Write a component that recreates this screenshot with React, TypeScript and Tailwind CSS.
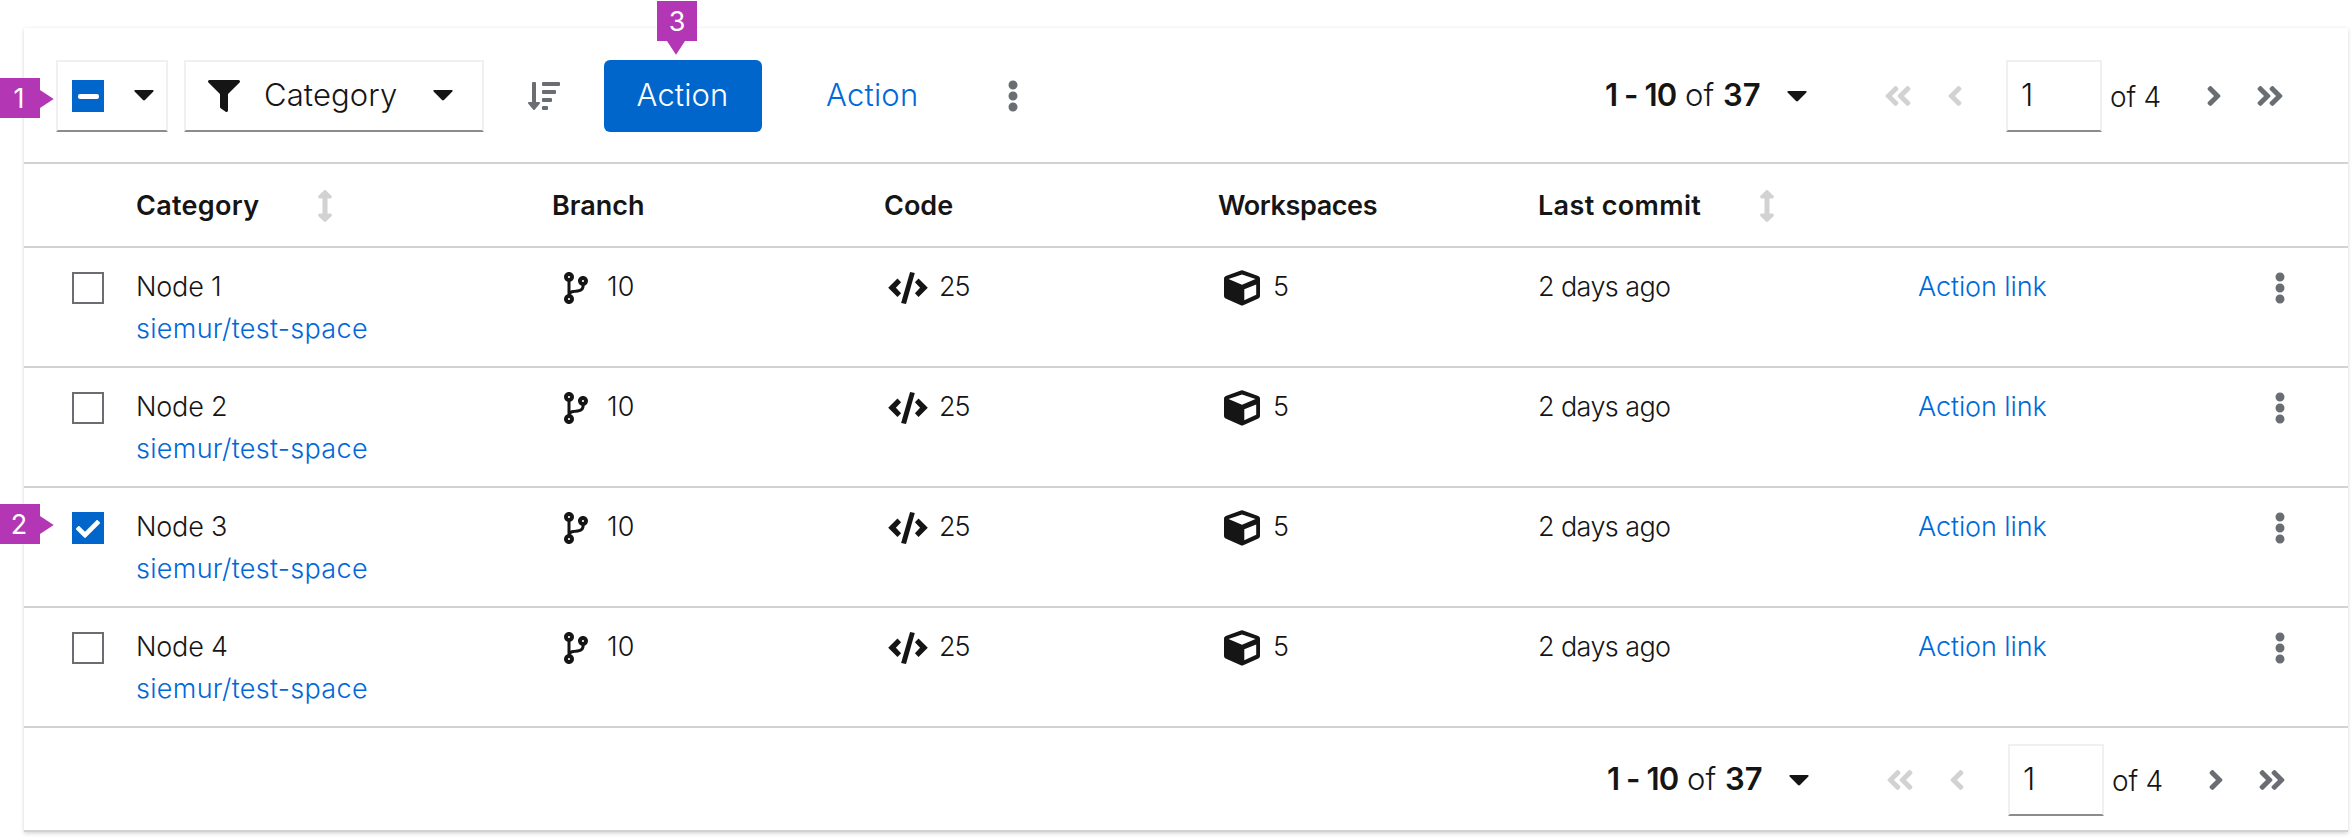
import React from "react";
import {
  FaAngleDoubleLeft,
  FaAngleDoubleRight,
  FaAngleLeft,
  FaAngleRight,
  FaArrowsAltV,
  FaCheck,
  FaCodeBranch,
  FaEllipsisV,
  FaFilter,
  FaSortAmountDown,
} from "react-icons/fa";

const rows = [
  { name: "Node 1", checked: false },
  { name: "Node 2", checked: false },
  { name: "Node 3", checked: true },
  { name: "Node 4", checked: false },
];

const columns =
  "grid grid-cols-[112px_416px_332px_335px_319px_380px_1fr] border-b-2 border-[#d2d2d2]";

function Caret() {
  return (
    <svg className="block h-[11px] w-[20px] shrink-0" viewBox="0 0 20 11" fill="#151515">
      <path d="M1.3 0h17.4c.9 0 1.3 1 .7 1.6L11 10.1c-.6.6-1.4.6-2 0L.6 1.6C0 1 .4 0 1.3 0z" />
    </svg>
  );
}

function CodeIcon() {
  return (
    <svg className="block h-8 w-10 shrink-0" viewBox="0 0 40 32" fill="#151515">
      <path d="M.2 15.8 9.5 6.6 13.1 10.2 7.9 15.8 13.1 21.3 9.5 25z" />
      <path d="M39.8 15.8 30.5 6.6 26.9 10.2 32.1 15.8 26.9 21.3 30.5 25z" />
      <path d="M22.1 0 26.8 1.1 18 32 13.1 30.9z" />
    </svg>
  );
}

function CubeIcon() {
  return (
    <svg className="block h-9 w-9 shrink-0" viewBox="0 0 36 36" fill="#151515" fillRule="evenodd">
      <path d="M16.9.4a3 3 0 0 1 2.2 0l15.1 5.5A2.8 2.8 0 0 1 36 8.5v17.6a2.8 2.8 0 0 1-1.6 2.5l-15.2 6.6a3 3 0 0 1-2.4 0L1.6 28.6A2.8 2.8 0 0 1 0 26.1V8.5a2.8 2.8 0 0 1 1.8-2.6zM18 4.5 4.5 9 18 14.8 31.5 9zM20.3 19.2V30.2L32.2 24.8V14.5z" />
    </svg>
  );
}

function Sort() {
  return <FaArrowsAltV className="block h-8 w-4 text-[#d2d2d2]" />;
}

function Pagination() {
  return (
    <div className="flex h-[72px] items-center text-[#151515]">
      <div className="mt-[-2px] flex w-[182px] items-center text-[31px] font-[350]">
        <span className="w-[80px] font-semibold tracking-[-0.9px] whitespace-nowrap">1 - 10</span>
        <span className="w-[38px]">of</span>
        <span className="font-semibold">37</span>
      </div>
      <Caret />
      <FaAngleDoubleLeft className="ml-[77px] h-8 w-7 text-[#d2d2d2]" />
      <FaAngleLeft className="ml-[35px] h-8 w-4 text-[#d2d2d2]" />
      <div className="ml-[43px] flex h-[72px] w-24 items-center border-2 border-[#f0f0f0] border-b-[#8a8d90] pb-[2px] pl-[13px] text-[31px] font-[350]">
        1
      </div>
      <span className="mt-px ml-[8px] w-[96px] text-[28px] font-[350] tracking-[-0.2px]">of 4</span>
      <FaAngleRight className="h-8 w-4 text-[#6a6e73]" />
      <FaAngleDoubleRight className="ml-[34px] h-8 w-7 text-[#6a6e73]" />
    </div>
  );
}

function SideBadge({ label, className }: { label: string; className: string }) {
  return (
    <div className={`absolute left-0 flex h-10 items-center ${className}`}>
      <div className="flex h-10 w-10 items-center justify-center bg-[#b337b5] pt-[2px] pr-[2px] text-[27px] text-white">
        {label}
      </div>
      <svg className="mt-[2px] block h-[18px] w-[14px]" viewBox="0 0 14 18" fill="#b337b5">
        <path d="M0 0 13.7 9 0 18z" />
      </svg>
    </div>
  );
}

function CheckBox({ checked }: { checked: boolean }) {
  if (!checked) return <div className="h-8 w-8 border-2 border-[#6a6e73]" />;
  return (
    <div className="flex h-8 w-8 items-center justify-center bg-[#0066cc] pt-[2px] text-white">
      <FaCheck className="h-6 w-6" />
    </div>
  );
}

export default function App() {
  return (
    <div className="relative h-[838px] w-[2352px] overflow-hidden bg-white pt-7 pl-6 font-['Inter',sans-serif] text-[#151515]">
      <div className="w-[2324px] bg-white shadow-[0_2px_4px_rgba(3,3,3,0.12),0_0_4px_rgba(3,3,3,0.06)]">
        <div className="flex h-[136px] items-start border-b-2 border-[#d2d2d2] pt-8 pl-8">
          <div className="flex h-[72px] w-28 items-center border-2 border-[#f0f0f0] border-b-[#8a8d90] pl-[14px]">
            <div className="flex h-8 w-8 items-center justify-center bg-[#0066cc]">
              <div className="mt-px h-[5px] w-[21px] rounded-[2px] bg-white" />
            </div>
            <div className="ml-[30px] pb-px">
              <Caret />
            </div>
          </div>
          <div className="ml-4 flex h-[72px] w-[300px] items-center border-2 border-[#f0f0f0] border-b-[#8a8d90] pl-[22px]">
            <FaFilter className="h-8 w-8" />
            <span className="mt-[-1px] ml-[24px] w-[169px] text-[31px] font-[350] tracking-[0.1px]">Category</span>
            <div className="pb-px">
              <Caret />
            </div>
          </div>
          <div className="flex h-[72px] items-center">
            <FaSortAmountDown className="ml-11 h-8 w-8 text-[#6a6e73]" />
            <button className="ml-11 flex h-[72px] w-[158px] items-center justify-center rounded-[6px] bg-[#0066cc] pr-px pb-px text-[31px] font-[350] tracking-[0.1px] text-white">
              Action
            </button>
            <a className="mt-[-1px] ml-[64px] w-[181px] text-[31px] font-[350] tracking-[0.2px] text-[#0069d9]">Action</a>
            <FaEllipsisV className="mt-[-1px] h-8 w-3 text-[#6a6e73]" />
          </div>
          <div className="ml-[586px]">
            <Pagination />
          </div>
        </div>

        <div className={`${columns} h-[84px] items-center pt-[2px] text-[27px] font-semibold`}>
          <div />
          <div className="flex items-center">
            <span className="w-[181px] tracking-[0.3px]">Category</span>
            <Sort />
          </div>
          <div>Branch</div>
          <div>Code</div>
          <div className="-ml-px tracking-[-0.4px]">Workspaces</div>
          <div className="col-span-2 flex items-center">
            <span className="w-[221px] tracking-[0.35px]">Last commit</span>
            <Sort />
          </div>
        </div>

        {rows.map((row) => (
          <div key={row.name} className={`${columns} h-[120px] items-start pt-6 text-[27px] leading-8 font-[350]`}>
            <div className="pl-12">
              <CheckBox checked={row.checked} />
            </div>
            <div className="mt-[-1px]">
              <div className="leading-[32px] tracking-[-0.2px]">{row.name}</div>
              <a className="mt-[10px] block leading-[32px] tracking-[0.3px] text-[#0069d9]">siemur/test-space</a>
            </div>
            <div className="flex items-center pl-3">
              <FaCodeBranch className="h-8 w-6" />
              <span className="mt-[-2px] ml-[19px]">10</span>
            </div>
            <div className="flex items-center pl-1">
              <CodeIcon />
              <span className="mt-[-2px] ml-[11px] tracking-[-1px]">25</span>
            </div>
            <div className="mt-[-2px] flex items-center pl-[5px]">
              <CubeIcon />
              <span className="mt-[-2px] ml-[13px]">5</span>
            </div>
            <div className="mt-[-1px] tracking-[-0.6px]">2 days ago</div>
            <div className="flex items-start">
              <a className="mt-[-1px] w-[356px] tracking-[-0.1px] text-[#0069d9]">Action link</a>
              <FaEllipsisV className="h-8 w-3 text-[#6a6e73]" />
            </div>
          </div>
        ))}

        <div className="flex h-[104px] items-start border-b-2 border-[#d2d2d2] pt-4 pl-[1583px]">
          <Pagination />
        </div>
      </div>

      <SideBadge label="1" className="top-[78px]" />
      <SideBadge label="2" className="top-[504px]" />
      <div className="absolute top-px left-[657px] flex flex-col items-start">
        <div className="flex h-10 w-10 items-center justify-center bg-[#b337b5] pt-[2px] text-[27px] text-white">3</div>
        <svg className="ml-[10px] block h-[14px] w-[18px]" viewBox="0 0 18 14" fill="#b337b5">
          <path d="M0 0H18L9 13.7z" />
        </svg>
      </div>
    </div>
  );
}
